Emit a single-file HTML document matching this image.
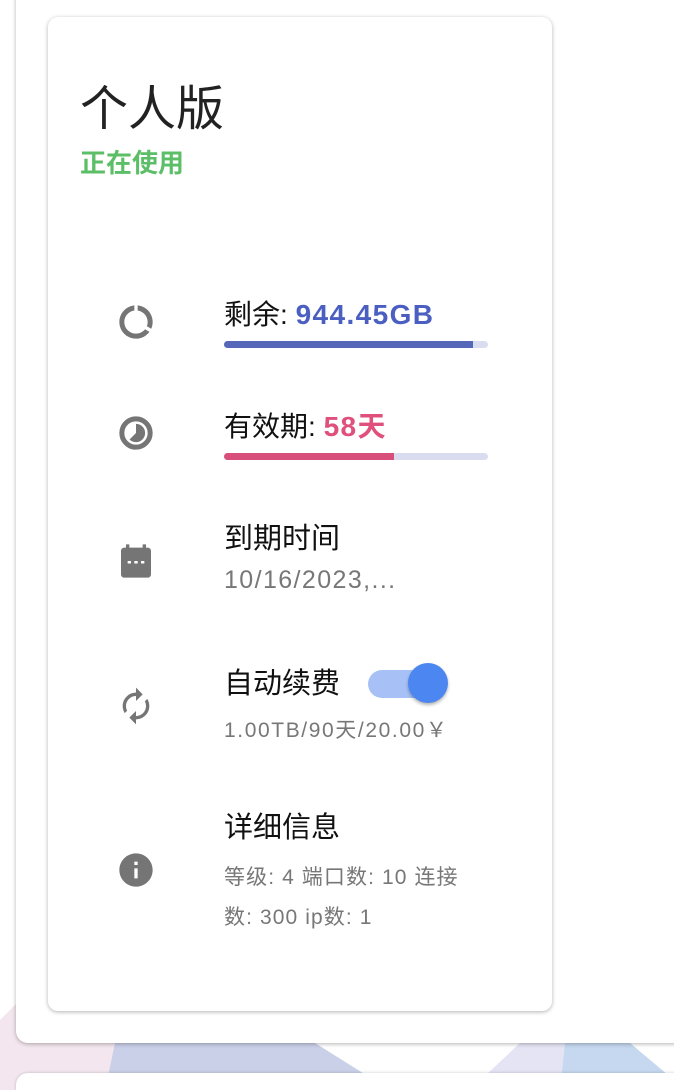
<!DOCTYPE html>
<html><head><meta charset="utf-8"><style>
html,body{margin:0;padding:0;width:674px;height:1090px;overflow:hidden;background:#fff;font-family:"Liberation Sans","Noto Sans CJK SC",sans-serif;}
.bg{position:absolute;left:0;top:0;width:674px;height:1090px;}
.outer{position:absolute;left:16px;top:-20px;width:700px;height:1063px;background:#fff;border-radius:12px;box-shadow:0 1px 4px rgba(0,0,0,.3);}
.outer2{position:absolute;left:16px;top:1073px;width:700px;height:17px;background:#fff;border-radius:12px 12px 0 0;box-shadow:0 0 3px rgba(0,0,0,.2);}
.card{position:absolute;left:48px;top:17px;width:504px;height:994px;background:#fff;border-radius:10px;box-shadow:0 1px 4px rgba(0,0,0,.3);}
.t{position:absolute;white-space:nowrap;}
.ic{position:absolute;left:116px;width:40px;height:40px;}
.bar{position:absolute;left:224px;width:264px;height:7px;border-radius:4px;background:#dadcef;overflow:hidden;}
.bar i{display:block;height:100%;}
.l{letter-spacing:1.4px;}
</style></head><body>
<svg class="bg" viewBox="0 0 674 1090">
<polygon points="0,1020 60,960 60,1090 0,1090" fill="#f3e6ee"/>
<polygon points="0,1043 115,1043 105,1090 0,1090" fill="#f3e6ee"/>
<polygon points="115,1043 315,1043 390,1090 105,1090" fill="#c9d0e8"/>
<polygon points="520,1043 565,1043 560,1090 470,1090" fill="#e4e4f4"/>
<polygon points="565,1043 630,1043 674,1080 674,1090 560,1090" fill="#c5d8ef"/>
</svg>
<div class="outer"></div>
<div class="outer2"></div>
<div class="card"></div>
<div class="t" style="left:80px;top:69px;font-size:48px;color:#222;">个人版</div>
<div class="t" style="left:80px;top:143px;font-size:26px;font-weight:bold;color:#5cbf67;">正在使用</div>

<svg class="ic" style="top:302px" viewBox="0 0 24 24"><path fill="#757575" d="M13 2.05v3.03c3.39.49 6 3.39 6 6.92 0 .9-.18 1.75-.48 2.54l2.6 1.53c.56-1.24.88-2.62.88-4.07 0-5.18-3.95-9.45-9-9.95zM12 19c-3.87 0-7-3.13-7-7 0-3.53 2.61-6.43 6-6.92V2.05c-5.06.5-9 4.76-9 9.95 0 5.52 4.47 10 9.99 10 3.31 0 6.24-1.61 8.06-4.09l-2.6-1.53C16.17 17.98 14.21 19 12 19z"/></svg>
<div class="t" style="left:224px;top:293px;font-size:28px;color:#111;">剩余: <b class="l" style="color:#4a5fc1">944.45GB</b></div>
<div class="bar" style="top:341px"><i style="width:249px;background:#5567b8"></i></div>

<svg class="ic" style="top:413px" viewBox="0 0 24 24"><circle cx="12" cy="12" r="8.5" fill="none" stroke="#757575" stroke-width="3"/><path fill="#757575" d="M12 6.5a5.5 5.5 0 1 1-3.9 9.4L12 12z"/></svg>
<div class="t" style="left:224px;top:405px;font-size:28px;color:#111;">有效期: <b class="l" style="color:#e0507c">58天</b></div>
<div class="bar" style="top:453px"><i style="width:170px;background:#d94f7b"></i></div>

<svg class="ic" style="top:541px" viewBox="0 0 24 24"><path fill="#757575" d="M19 4h-1V2h-2v2H8V2H6v2H5c-1.1 0-2 .9-2 2v14c0 1.1.9 2 2 2h14c1.1 0 2-.9 2-2V6c0-1.1-.9-2-2-2z"/><rect x="7" y="12" width="2" height="1.5" fill="#fff"/><rect x="11" y="12" width="2" height="1.5" fill="#fff"/><rect x="15" y="12" width="2" height="1.5" fill="#fff"/></svg>
<div class="t" style="left:224px;top:515px;font-size:29px;color:#111;">到期时间</div>
<div class="t l" style="left:224px;top:566px;font-size:25px;color:#777;">10/16/2023,...</div>

<svg class="ic" style="top:686px" viewBox="0 0 24 24"><path fill="#757575" d="M12 6v3l4-4-4-4v3c-4.42 0-8 3.58-8 8 0 1.57.46 3.03 1.24 4.26L6.7 14.8c-.45-.83-.7-1.79-.7-2.8 0-3.31 2.69-6 6-6zm6.76 1.74L17.3 9.2c.44.84.7 1.790.7 2.8 0 3.31-2.69 6-6 6v-3l-4 4 4 4v-3c4.42 0 8-3.58 8-8 0-1.57-.46-3.03-1.24-4.26z"/></svg>
<div class="t" style="left:224px;top:660px;font-size:29px;color:#111;">自动续费</div>
<div style="position:absolute;left:368px;top:670px;width:72px;height:28px;border-radius:14px;background:#a7c1f7;"></div>
<div style="position:absolute;left:408px;top:663px;width:40px;height:40px;border-radius:50%;background:#4c86f0;box-shadow:0 2px 3px rgba(0,0,0,.3);"></div>
<div class="t" style="left:224px;top:714px;font-size:21px;color:#777;letter-spacing:1.6px;">1.00TB/90天/20.00￥</div>

<svg class="ic" style="top:850px" viewBox="0 0 24 24"><path fill="#757575" d="M12 2C6.48 2 2 6.48 2 12s4.48 10 10 10 10-4.48 10-10S17.52 2 12 2zm1 15h-2v-6h2v6zm0-8h-2V7h2v2z"/></svg>
<div class="t" style="left:224px;top:804px;font-size:29px;color:#111;">详细信息</div>
<div class="t" style="left:224px;top:858px;font-size:21px;color:#777;line-height:40px;letter-spacing:1.1px;">等级: 4 端口数: 10 连接<br>数: 300 ip数: 1</div>
</body></html>
